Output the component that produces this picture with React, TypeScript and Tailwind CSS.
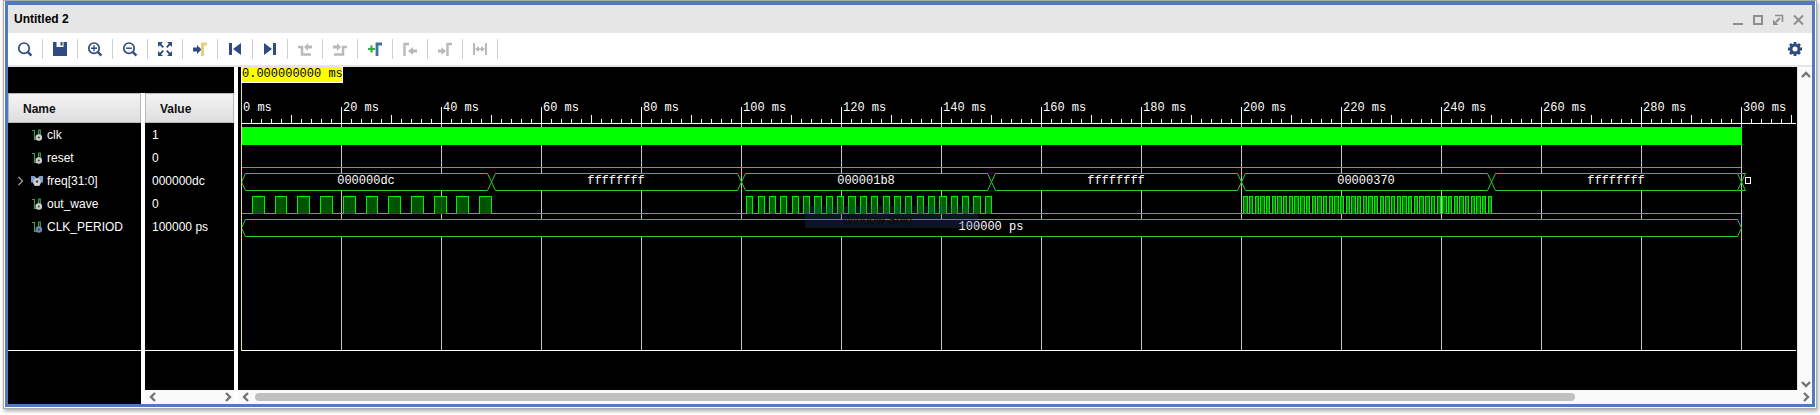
import type { ReactNode } from 'react';

const NAVY = '#2f4b82';
const GRAY = '#b9b9b9';

type Signal = { name: string; value: string; kind: 'wire' | 'bus' | 'const' };

const signals: Signal[] = [
  { name: 'clk', value: '1', kind: 'wire' },
  { name: 'reset', value: '0', kind: 'wire' },
  { name: 'freq[31:0]', value: '000000dc', kind: 'bus' },
  { name: 'out_wave', value: '0', kind: 'wire' },
  { name: 'CLK_PERIOD', value: '100000 ps', kind: 'const' },
];

function Icon({ children }: { children: ReactNode }) {
  return (
    <svg width="16" height="16" viewBox="0 0 16 16" fill="none" aria-hidden="true">
      {children}
    </svg>
  );
}

function Lens({ children }: { children?: ReactNode }) {
  return (
    <Icon>
      <circle cx="7" cy="7.2" r="5.2" stroke={NAVY} strokeWidth="1.7" />
      <path d="M10.800 11l3.600 3.600" stroke={NAVY} strokeWidth="2.4" />
      {children}
    </Icon>
  );
}

const tools: { label: string; disabled?: boolean; icon: ReactNode }[] = [
  { label: 'Search', icon: <Lens /> },
  {
    label: 'Save',
    icon: (
      <Icon>
        <path d="M1 1h3.500v5h7V1H15v14H1z" fill={NAVY} />
        <path d="M8.500 1h2v3.500h-2z" fill={NAVY} />
      </Icon>
    ),
  },
  {
    label: 'Zoom In',
    icon: (
      <Lens>
        <path d="M4 7.2h6M7 4.200v6" stroke={NAVY} strokeWidth="1.4" />
      </Lens>
    ),
  },
  {
    label: 'Zoom Out',
    icon: (
      <Lens>
        <path d="M4 7.2h6" stroke={NAVY} strokeWidth="1.4" />
      </Lens>
    ),
  },
  {
    label: 'Zoom Fit',
    icon: (
      <Icon>
        <path d="M1 1h5L1 6zM15 1v5l-5-5zM1 15v-5l5 5zM15 15h-5l5-5z" fill={NAVY} />
        <path d="M3 3l3.300 3.300M13 3L9.700 6.300M3 13l3.300-3.300M13 13L9.700 9.700" stroke={NAVY} strokeWidth="1.800" />
      </Icon>
    ),
  },
  {
    label: 'Go to Cursor',
    icon: (
      <Icon>
        <path d="M1 6.500h4V4l4.500 4.500L5 13v-2.500H1z" fill={NAVY} />
        <path d="M10.500 15V3H15" stroke="#e3cf7a" strokeWidth="3" />
      </Icon>
    ),
  },
  {
    label: 'Go to Time 0',
    icon: (
      <Icon>
        <path d="M2 2h3v12H2zM14 2v12L6 8z" fill={NAVY} />
      </Icon>
    ),
  },
  {
    label: 'Go to Last Time',
    icon: (
      <Icon>
        <path d="M11 2h3v12h-3zM2 2v12l8-6z" fill={NAVY} />
      </Icon>
    ),
  },
  {
    label: 'Previous Transition',
    disabled: true,
    icon: (
      <Icon>
        <path d="M1 6h4v7.500h9" stroke={GRAY} strokeWidth="2.500" />
        <path d="M15 4.500h-4V2L7 6l4 4V7.500h4z" fill={GRAY} />
      </Icon>
    ),
  },
  {
    label: 'Next Transition',
    disabled: true,
    icon: (
      <Icon>
        <path d="M15 6h-4v7.500H2" stroke={GRAY} strokeWidth="2.500" />
        <path d="M1 4.500h4V2l4 4-4 4V7.500H1z" fill={GRAY} />
      </Icon>
    ),
  },
  {
    label: 'Add Marker',
    icon: (
      <Icon>
        <path d="M1 8h7M4.500 4.500v7" stroke="#2fb43a" strokeWidth="2.200" />
        <path d="M10 15V3h5" stroke="#3f72a4" strokeWidth="2.800" />
      </Icon>
    ),
  },
  {
    label: 'Previous Marker',
    disabled: true,
    icon: (
      <Icon>
        <path d="M2.500 15V3H7" stroke={GRAY} strokeWidth="2.400" />
        <path d="M15 8.500h-4V6L6 10l5 4v-2.500h4z" fill={GRAY} />
      </Icon>
    ),
  },
  {
    label: 'Next Marker',
    disabled: true,
    icon: (
      <Icon>
        <path d="M10.500 15V3H15" stroke={GRAY} strokeWidth="2.400" />
        <path d="M1 8.500h3.500V6L9 10l-4.500 4v-2.500H1z" fill={GRAY} />
      </Icon>
    ),
  },
  {
    label: 'Swap Cursors',
    disabled: true,
    icon: (
      <Icon>
        <path d="M2 2v12M14 2v12" stroke={GRAY} strokeWidth="2" />
        <path d="M4 8h8" stroke={GRAY} strokeWidth="1.500" />
        <path d="M3 8l4-3v6zM13 8L9 5v6z" fill={GRAY} />
      </Icon>
    ),
  },
];

const windowButtons: { label: string; icon: ReactNode }[] = [
  { label: 'Minimize', icon: <path d="M0 10h10" stroke="#8e8e8e" strokeWidth="2" /> },
  { label: 'Maximize', icon: <path d="M1 2h8v8H1z" stroke="#8e8e8e" strokeWidth="2" /> },
  {
    label: 'Float',
    icon: (
      <>
        <path d="M2 1.500h7.500V8" stroke="#8e8e8e" strokeWidth="1.600" />
        <path d="M7 4L3 8" stroke="#8e8e8e" strokeWidth="2" />
        <path d="M0 5.500V11h5.500z" fill="#8e8e8e" />
      </>
    ),
  },
  { label: 'Close', icon: <path d="M1 1.500l9 9M10 1.500l-9 9" stroke="#8e8e8e" strokeWidth="2" /> },
];

function SignalIcon({ kind }: { kind: Signal['kind'] }) {
  if (kind === 'bus') {
    return (
      <svg width="12" height="12" viewBox="0 0 12 12" className="shrink-0" aria-hidden="true">
        <path d="M0 1h3.500L6 3.500 8.500 1H12v6.500h-2L8.500 11h-5L2 7.500H0z" fill="#7f9fc4" />
        <circle cx="6" cy="7" r="3.700" fill="#cfcfcf" />
        <circle cx="6" cy="6.500" r="1.300" fill="#444" />
      </svg>
    );
  }
  const dot = kind === 'const' ? '#6f86b5' : '#cfcfcf';
  return (
    <svg width="12" height="12" viewBox="0 0 12 12" className="shrink-0" fill="none" aria-hidden="true">
      <path d="M1 1.500h2.500v9H7M7.500 7V1h1.800v6" stroke="#3f9a57" strokeWidth="1.200" />
      <circle cx="7.800" cy="8.500" r="3.300" fill={dot} />
      <circle cx="7.800" cy="8.500" r="1.100" fill={kind === 'const' ? '#24385f' : '#444'} />
    </svg>
  );
}

function Arrow({ dir }: { dir: 'left' | 'right' | 'up' | 'down' }) {
  const paths = {
    left: 'M7 1L3 5l4 4',
    right: 'M3 1l4 4-4 4',
    up: 'M1 7l4-4 4 4',
    down: 'M1 3l4 4 4-4',
  };
  return (
    <button type="button" aria-label={`Scroll ${dir}`} className="flex size-3 shrink-0 items-center justify-center">
      <svg width="10" height="10" viewBox="0 0 10 10" fill="none" aria-hidden="true">
        <path d={paths[dir]} stroke="#747474" strokeWidth="2.400" />
      </svg>
    </button>
  );
}

/* Waveform geometry: 5 px per millisecond, time zero 3 px from the left edge. */
const X0 = 3;
const PX = 5;
const END = X0 + 300 * PX;
const AXIS = 56;
const FLOOR = 283;
const WAVE = '#2fcc2f';
const at = (ms: number) => X0 + ms * PX;

const busSegments = [
  { from: 0, to: 50, text: '000000dc' },
  { from: 50, to: 100, text: 'ffffffff' },
  { from: 100, to: 150, text: '000001b8' },
  { from: 150, to: 200, text: 'ffffffff' },
  { from: 200, to: 250, text: '00000370' },
  { from: 250, to: 300, text: 'ffffffff' },
];

const bursts = [
  { start: 0, count: 11, fill: '#005c00' },
  { start: 100, count: 22, fill: '#006c00' },
  { start: 200, count: 44, fill: '#008a00' },
];

function Bus({ x1, x2, top, text }: { x1: number; x2: number; top: number; text: string }) {
  const mid = top + 9;
  const bottom = top + 17;
  const d = `M${x1 + 0.5} ${mid}L${x1 + 4.5} ${top + 0.5}H${x2 - 3.5}L${x2 + 0.5} ${mid}L${x2 - 3.5} ${bottom + 0.5}H${x1 + 4.5}Z`;
  return (
    <g>
      <path d={d} fill="#000" stroke={WAVE} />
      <text x={(x1 + x2) / 2} y={top + 11} fill="#fff" textAnchor="middle">
        {text}
      </text>
    </g>
  );
}

function Waveform() {
  const ticks = Array.from({ length: 156 }, (_, i) => i * 2);
  const majors = Array.from({ length: 16 }, (_, i) => i * 20);
  return (
    <svg width="1559" height="323" className="block font-['Liberation_Mono',monospace] text-xs" role="img" aria-label="Waveform">
      <g shapeRendering="crispEdges">
        {majors.slice(1).map((ms) => (
          <rect key={ms} x={at(ms)} y={AXIS} width="1" height={FLOOR - AXIS} fill="#c4c4c4" />
        ))}
        {ticks.map((ms) => {
          const h = ms % 20 === 0 ? 16 : ms % 10 === 0 ? 8 : 4;
          return ms === 0 ? null : <rect key={ms} x={at(ms)} y={AXIS - h} width="1" height={h} fill="#fff" />;
        })}
        <rect x={X0} y={AXIS} width="1555" height="1" fill="#fff" />
        <rect x={X0} y={FLOOR} width="1555" height="1" fill="#fff" />
        <rect x={X0} y="60" width={END - X0 + 1} height="18" fill="#00ff00" />
        <rect x={X0} y="100" width={END - X0} height="1" fill={WAVE} />
        <rect x={X0} y="146" width={END - X0} height="1" fill={WAVE} />
      </g>
      {majors.map((ms) => (
        <text key={ms} x={at(ms) + 2} y="44" fill="#fff">
          {ms} ms
        </text>
      ))}
      {busSegments.map((s) => (
        <Bus key={s.from} x1={at(s.from)} x2={at(s.to)} top={106} text={s.text} />
      ))}
      <path d={`M${END - 3} 106.500H${END + 4.5}L${END + 0.5} 115L${END + 4.5} 123.500H${END - 3}`} stroke={WAVE} fill="none" />
      <rect x={END + 4.5} y="110.500" width="5" height="6" fill="none" stroke="#fff" />
      <g shapeRendering="crispEdges">
        {bursts.map(({ start, count, fill }) => {
          const period = (50 * PX) / count;
          return Array.from({ length: count }, (_, i) => {
            const a = Math.floor(at(start) + (i + 0.5) * period);
            const b = Math.round(at(start) + (i + 1) * period);
            return (
              <g key={`${start}-${i}`}>
                <rect x={a} y="129" width={b - a} height="18" fill={fill} fillOpacity="0.9" />
                <path d={`M${a + 0.5} 147V129.500H${b + 0.5}V147`} fill="none" stroke="#00ee00" />
              </g>
            );
          });
        })}
      </g>
      <Bus x1={X0} x2={END} top={152} text="100000 ps" />
      <rect x="567" y="139" width="173" height="22" fill="#2a4a80" fillOpacity="0.28" />
      <text x="604" y="157" fill="#060a12" className="font-['Liberation_Sans',sans-serif]">
        Window Snip
      </text>
      <rect x={X0} y="16" width="1" height={FLOOR - 15} fill="#e8e850" />
      <rect x={X0} y="0" width="102" height="16" fill="#fff" />
      <rect x={X0 + 1} y="0" width="100" height="15" fill="#ffff00" />
      <text x={X0 + 1} y="10" fill="#000">
        0.000000000 ms
      </text>
    </svg>
  );
}

function HeaderCell({ children }: { children: ReactNode }) {
  return (
    <th scope="col" className="h-[30px] border border-[#b8b8b8] bg-linear-to-b from-[#f4f4f5] to-[#dedee0] pt-[2px] pl-[14px] text-left font-bold text-[#111]">
      {children}
    </th>
  );
}

export default function App() {
  return (
    <div className="bg-white pr-[3px] pb-[5px] pl-[3px] font-['Liberation_Sans',sans-serif] text-xs text-black">
      <main className="border border-[#a9a9a9] bg-white px-px pb-px shadow-[1px_2px_4px_rgba(0,0,0,0.35)]">
        <div className="border-[3px] border-t-4 border-[#4f79c0]">
          <header className="flex h-7 items-center justify-between bg-[#e6e6e6] pr-2 pl-[6px]">
            <h1 className="font-bold">Untitled 2</h1>
            <div className="flex gap-2">
              {windowButtons.map((b) => (
                <button key={b.label} type="button" aria-label={b.label} className="flex size-3 items-center justify-center">
                  <svg width="11" height="11" viewBox="0 0 11 11" fill="none" aria-hidden="true">
                    {b.icon}
                  </svg>
                </button>
              ))}
            </div>
          </header>

          <div className="flex h-8 items-center justify-between bg-white pr-[9px]">
            <div className="flex">
              {tools.map((t) => (
                <button key={t.label} type="button" aria-label={t.label} disabled={t.disabled} className="flex h-5 w-[35px] items-center justify-center border-r border-[#cfcfcf]">
                  {t.icon}
                </button>
              ))}
            </div>
            <button type="button" aria-label="Settings">
              <Icon>
                <circle cx="8" cy="8" r="4" stroke={NAVY} strokeWidth="3" />
                <path d="M8 1v3M8 12v3M1 8h3M12 8h3M3 3l2 2M11 11l2 2M13 3l-2 2M5 11l-2 2" stroke={NAVY} strokeWidth="2.800" />
              </Icon>
            </button>
          </div>

          <div className="flex border-t-2 border-[#e6e6ea] bg-white">
            <div className="flex w-[230px] shrink-0 flex-col border-r-4 border-white">
              <div className="h-[26px] bg-black" />
              <div className="flex flex-1 gap-1">
                <section className="flex w-[133px] flex-col bg-black text-white">
                  <div className="h-[258px] shrink-0 border-b border-white">
                    <table className="w-full border-separate border-spacing-0">
                      <thead>
                        <tr>
                          <HeaderCell>Name</HeaderCell>
                        </tr>
                      </thead>
                      <tbody>
                        {signals.map((s) => (
                          <tr key={s.name}>
                            <td className="h-[23px] p-0 pl-[9px]">
                              <div className="flex items-center">
                                <span className="flex w-[14px]">
                                  {s.kind === 'bus' && (
                                    <button type="button" aria-label="Expand freq">
                                      <svg width="8" height="10" viewBox="0 0 8 10" fill="none" aria-hidden="true">
                                        <path d="M1.500 1l4 4-4 4" stroke="#a0a0a0" strokeWidth="1.300" />
                                      </svg>
                                    </button>
                                  )}
                                </span>
                                <SignalIcon kind={s.kind} />
                                <span className="pl-1">{s.name}</span>
                              </div>
                            </td>
                          </tr>
                        ))}
                      </tbody>
                    </table>
                  </div>
                </section>

                <section className="flex flex-1 flex-col bg-black text-white">
                  <div className="h-[258px] shrink-0 border-b border-white">
                    <table className="w-full border-separate border-spacing-0">
                      <thead>
                        <tr>
                          <HeaderCell>Value</HeaderCell>
                        </tr>
                      </thead>
                      <tbody>
                        {signals.map((s) => (
                          <tr key={s.name}>
                            <td className="h-[23px] p-0 pl-[7px]">{s.value}</td>
                          </tr>
                        ))}
                      </tbody>
                    </table>
                  </div>
                  <div className="mt-auto flex h-[14px] items-center justify-between bg-[#fafafa] pl-[2px]">
                    <Arrow dir="left" />
                    <Arrow dir="right" />
                  </div>
                </section>
              </div>
            </div>

            <section className="flex min-w-0 flex-1 flex-col">
              <div className="flex">
                <div className="min-w-0 flex-1 overflow-hidden bg-black">
                  <Waveform />
                </div>
                <div className="flex w-[15px] shrink-0 flex-col items-center justify-between border-l border-[#e4e4e4] bg-[#fafafa] pt-[2px] pl-px">
                  <Arrow dir="up" />
                  <Arrow dir="down" />
                </div>
              </div>
              <div className="flex h-[14px] items-center bg-[#fafafa] pl-[2px]">
                <Arrow dir="left" />
                <div className="mx-[3px] flex flex-1">
                  <div className="h-2 w-[85.6%] rounded-full bg-[#c0c0c0]" />
                </div>
                <Arrow dir="right" />
              </div>
            </section>
          </div>
        </div>
      </main>
    </div>
  );
}
